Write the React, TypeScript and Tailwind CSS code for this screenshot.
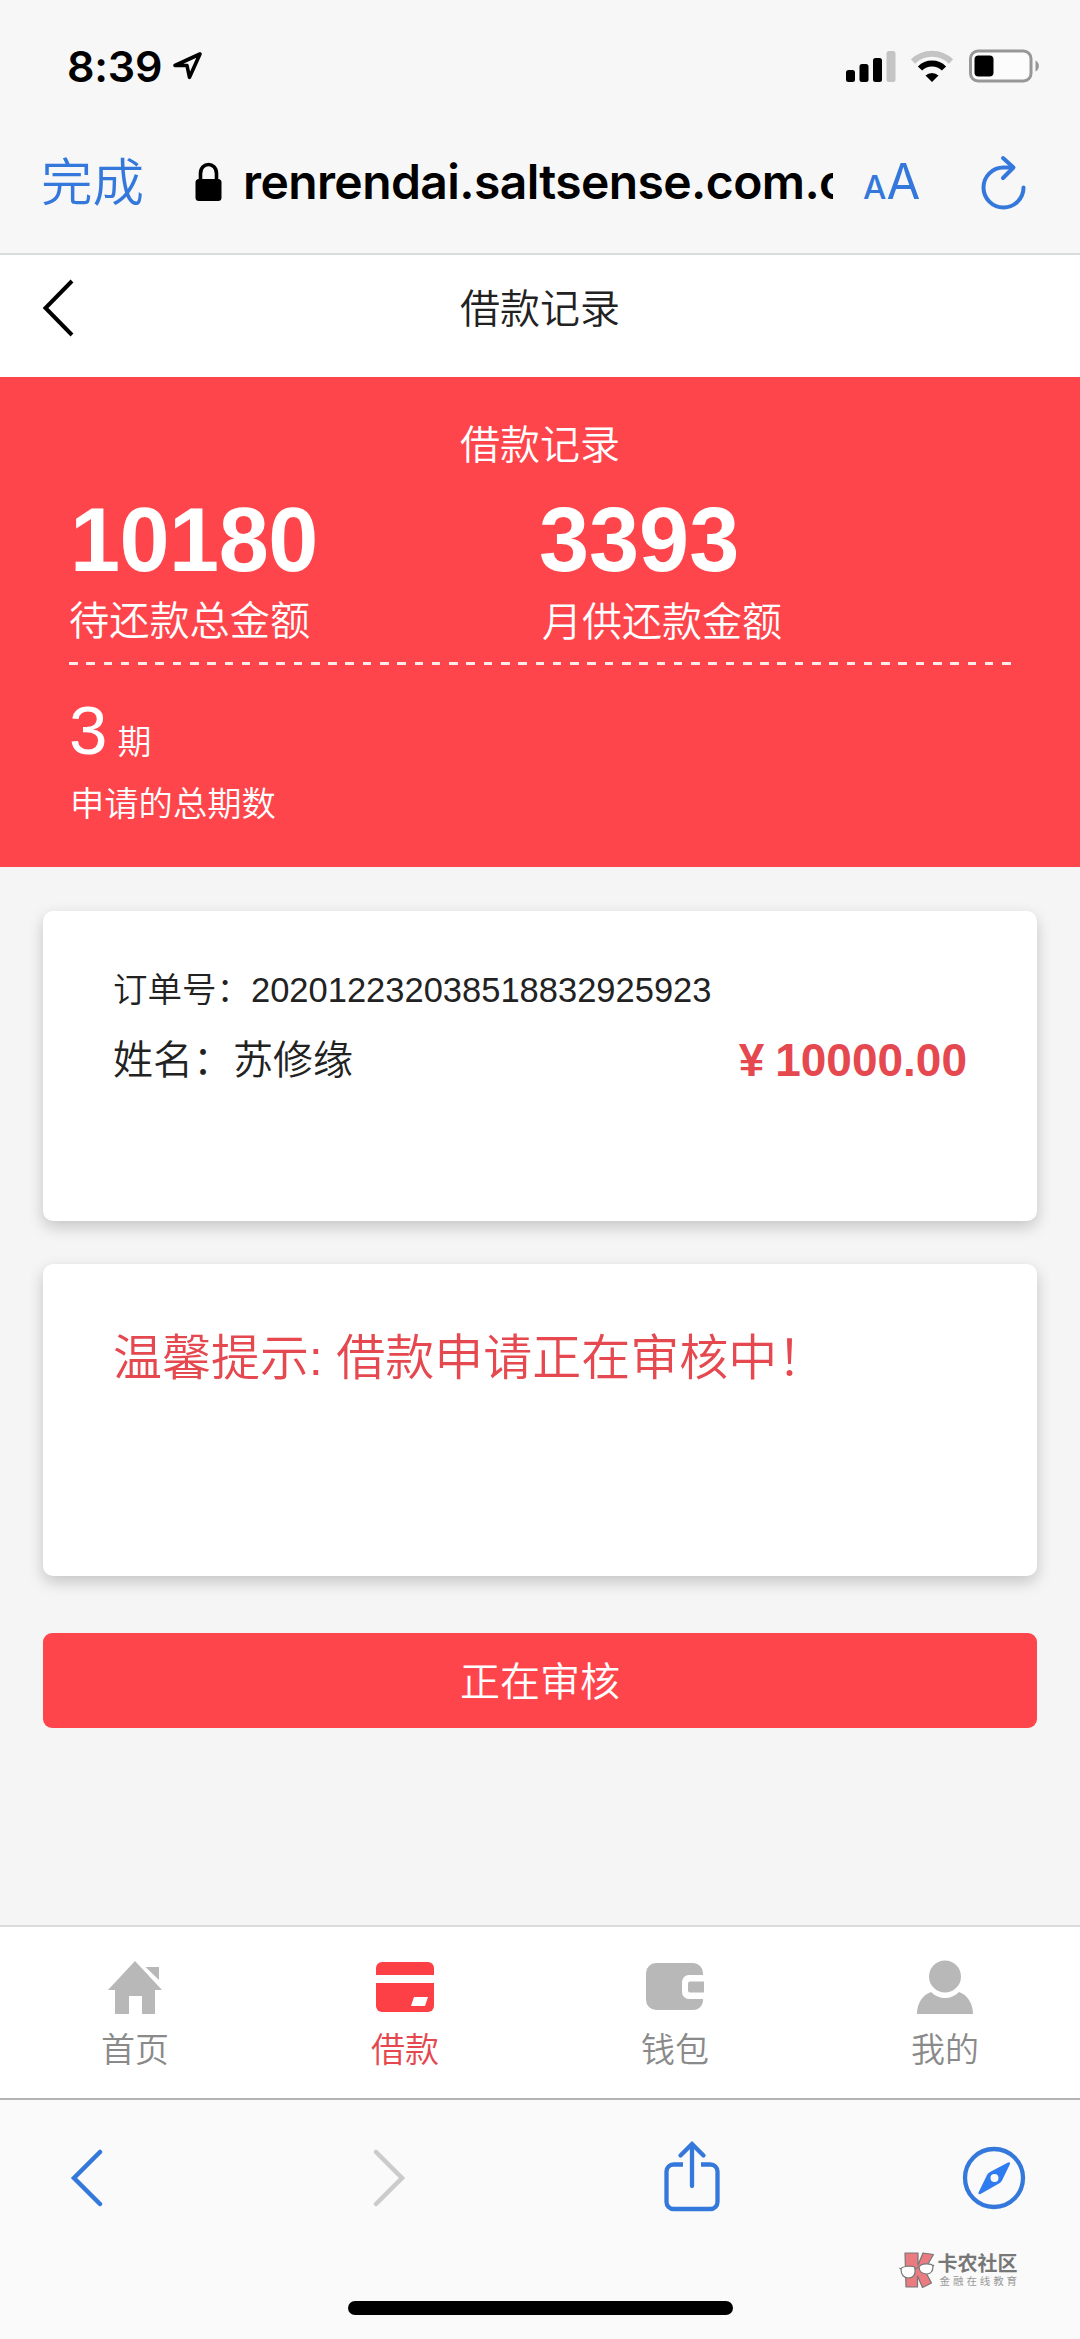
import { ReactNode } from "react";
import clsx from "clsx";

type TabProps = {
  label: string;
  active?: boolean;
  icon: ReactNode;
};

function StatusBar() {
  return (
    <div className="flex h-[132px] items-center pl-[67px] pr-[40px]">
      <span className="text-[43px] font-semibold leading-[60px] tracking-[-0.2px] font-['Inter',sans-serif]">
        8:39
      </span>
      <svg className="ml-[10px] h-[30px] w-[31px]" viewBox="0 0 31 30" fill="none">
        <path
          d="M28 3 3 14.500h12l2.500 11.800z"
          stroke="#000"
          strokeWidth="3.600"
          strokeLinejoin="round"
        />
      </svg>
      <div className="ml-auto flex items-center">
        <svg className="h-[32px] w-[50px]" viewBox="0 0 50 32">
          <rect x="0" y="20" width="9" height="12" rx="2.500" />
          <rect x="13.500" y="14" width="9" height="18" rx="2.500" />
          <rect x="27" y="8" width="9" height="24" rx="2.500" />
          <rect x="40.500" y="1" width="9" height="31" rx="2.500" fill="#c4c4c4" />
        </svg>
        <svg className="ml-[14px] h-[32px] w-[44px]" viewBox="0 0 44 32" fill="none">
          <path d="M3 11.500a27 27 0 0 1 38 0" stroke="#c4c4c4" strokeWidth="6" />
          <path d="M10 18.500a17 17 0 0 1 24 0" stroke="#000" strokeWidth="6" />
          <path d="M15.500 25.500a9.500 9.500 0 0 1 13 0L22 32z" fill="#000" />
        </svg>
        <svg className="ml-[14px] h-[34px] w-[72px]" viewBox="0 0 72 34">
          <rect
            x="2.500"
            y="2"
            width="60.500"
            height="30"
            rx="7.500"
            fill="#fcfcfc"
            stroke="#979797"
            strokeWidth="3"
          />
          <rect x="6.500" y="6.500" width="19" height="21" rx="4" />
          <path d="M67.500 11.500c4.500 2 4.500 9 0 11z" fill="#979797" />
        </svg>
      </div>
    </div>
  );
}

function AddressBar() {
  return (
    <div className="flex h-[121px] items-center pb-[23px] pl-[41px] pr-[54px] pt-[2px]">
      <span className="pt-[2px] text-[51.500px] leading-[60px] text-[#3478dc]">完成</span>
      <svg className="ml-[51px] h-[40px] w-[27px] shrink-0" viewBox="0 0 27 40">
        <path
          d="M5.500 19v-7.500c0-12 16-12 16 0V19"
          fill="none"
          stroke="#000"
          strokeWidth="3.600"
        />
        <rect x="0.500" y="17" width="26" height="22" rx="3.500" />
      </svg>
      <div className="ml-[21px] w-[590px] overflow-hidden whitespace-nowrap text-[48px] font-semibold leading-[60px] tracking-[-0.600px] font-['Inter',sans-serif]">
        renrendai.saltsense.com.c
      </div>
      <div className="ml-[30px] flex items-baseline pt-[4px] text-[#3478dc] font-['Inter',sans-serif]">
        <span className="text-[33px] font-medium leading-[60px]">A</span>
        <span className="text-[49px] font-normal leading-[60px]">A</span>
      </div>
      <svg
        className="ml-auto h-[58px] w-[46px]"
        viewBox="0 0 46 58"
        fill="none"
        stroke="#3478dc"
        strokeWidth="4"
        strokeLinecap="round"
        strokeLinejoin="round"
      >
        <path d="M43.500 34.500A20 20 0 1 1 23.500 14.500h9" />
        <path d="M23 5l10.500 9.500L23 25" />
      </svg>
    </div>
  );
}

function Card({ children }: { children: ReactNode }) {
  return (
    <div className="rounded-[10px] bg-white px-[70px] shadow-[0_6px_16px_rgba(0,0,0,0.2)]">
      {children}
    </div>
  );
}

function Tab({ label, active, icon }: TabProps) {
  return (
    <div
      className={clsx(
        "flex flex-1 flex-col items-center pt-[31px]",
        active ? "text-[#e5474e]" : "text-[#8a8a8a]"
      )}
    >
      <svg
        className={clsx("h-[58px] w-[60px]", active ? "fill-[#fc4045]" : "fill-[#b8b8b8]")}
        viewBox="0 0 60 58"
      >
        {icon}
      </svg>
      <span className="mt-[12px] text-[34px] leading-[44px]">{label}</span>
    </div>
  );
}

const tabs: TabProps[] = [
  {
    label: "首页",
    icon: (
      <>
        <path d="M30 3 57 32h-7v24H37V38H24v18H10V32H3z" />
        <path d="M40.500 9H54v13z" />
      </>
    ),
  },
  {
    label: "借款",
    active: true,
    icon: (
      <>
        <path d="M1 17V10a6 6 0 0 1 6-6h46a6 6 0 0 1 6 6v7z" />
        <path d="M1 25h58v23a6 6 0 0 1-6 6H7a6 6 0 0 1-6-6z" />
        <path d="M39 39h14l-3 9H36z" fill="#fff" />
      </>
    ),
  },
  {
    label: "钱包",
    icon: (
      <>
        <path d="M11 5h37a10 10 0 0 1 10 10v2H44a7 7 0 0 0-7 7v10a7 7 0 0 0 7 7h14a10 10 0 0 1-10 11H11A10 10 0 0 1 1 42V15A10 10 0 0 1 11 5z" />
        <path d="M45 23.500h14v11H45a2 2 0 0 1-2-2v-7a2 2 0 0 1 2-2z" />
      </>
    ),
  },
  {
    label: "我的",
    icon: (
      <>
        <circle cx="30" cy="18.500" r="16" />
        <path d="M16 34c8 8 20 8 28 0 9 3 14 12 14 22H2c0-10 5-19 14-22z" />
      </>
    ),
  },
];

function Watermark() {
  return (
    <div className="absolute right-[60px] top-[151px] flex items-center">
      <svg
        className="h-[38px] w-[36px]"
        viewBox="0 0 36 38"
        fill="#ea7b81"
        stroke="#777"
        strokeWidth="1.200"
        strokeLinejoin="round"
      >
        <path d="M6 2h13v12L24 2l10.500 1.500L25.500 19l7 13-9 4.500L18.500 25v11H7z" />
        <path d="M2 18c1-3 13-4 14-1 1 7-2 10-6.500 10S2 24 2 18z" fill="#fff" />
        <path d="M20 16c2-4 12-4 14-1 0 6-3 8-6.500 8S20 21 20 16z" fill="#fff" />
        <path d="M15.500 18l4.500-2M2 18l-1.500-1M34 15l1-1" fill="none" />
      </svg>
      <div className="ml-[3px] flex flex-col">
        <span className="text-[20px] font-bold leading-[22px] text-[#777]">卡农社区</span>
        <span className="pl-[2px] text-[10.500px] font-normal leading-[12px] tracking-[2.900px] text-[#999]">
          金融在线教育
        </span>
      </div>
    </div>
  );
}

export default function App() {
  return (
    <div className="flex h-[2339px] w-[1080px] flex-col overflow-hidden bg-[#f5f5f5] font-[350] text-[#222] font-['Liberation_Sans','Noto_Sans_CJK_SC',sans-serif]">
      <header className="h-[255px] border-b-2 border-[#d9dcdc] bg-[#f7f7f7] text-black">
        <StatusBar />
        <AddressBar />
      </header>

      <nav className="grid h-[122px] grid-cols-[1fr_auto_1fr] items-center bg-white px-[42px] pb-[16px]">
        <svg className="h-[58px] w-[32px]" viewBox="0 0 32 58" fill="none">
          <path d="M30 2 3.500 29 30 56" stroke="#000" strokeWidth="4" />
        </svg>
        <h1 className="pt-[2px] text-[40px] leading-[56px]">借款记录</h1>
      </nav>

      <section className="h-[490px] bg-[#ff454c] px-[69px] pt-[40px] text-white">
        <h2 className="text-center text-[40px] font-[350] leading-[56px]">借款记录</h2>
        <div className="mt-[22px] grid grid-cols-2">
          <div>
            <p className="pl-[1px] text-[90px] font-bold leading-[90px] tracking-[-0.500px]">
              10180
            </p>
            <p className="mt-[13px] text-[40.200px] leading-[48px]">待还款总金额</p>
          </div>
          <div>
            <p className="-ml-[1px] text-[90px] font-bold leading-[90px]">3393</p>
            <p className="mt-[13px] pl-[2px] text-[40px] leading-[48px]">月供还款金额</p>
          </div>
        </div>
        <div className="mt-[16px] h-[3px] w-[942px] bg-[repeating-linear-gradient(90deg,#ffe9e9_0_8.600px,transparent_8.600px_17.280px)]" />
        <p className="mt-[28px] flex h-[76px] items-baseline leading-[76px]">
          <span className="text-[69px]">3</span>
          <span className="ml-[10px] text-[34px]">期</span>
        </p>
        <p className="mt-[10px] pl-[1px] text-[34.300px] leading-[50px]">申请的总期数</p>
      </section>

      <main className="flex flex-1 flex-col px-[43px] pt-[44px]">
        <Card>
          <div className="h-[310px] pt-[54px]">
            <p className="text-[34.500px] leading-[50px]">订单号：202012232038518832925923</p>
            <div className="mt-[15px] flex items-center justify-between leading-[60px]">
              <span className="text-[40px]">姓名：苏修缘</span>
              <span className="text-[46px] font-bold text-[#e5484f] [word-spacing:-2px]">
                ¥ 10000.00
              </span>
            </div>
          </div>
        </Card>
        <div className="h-[43px]" />
        <Card>
          <div className="h-[312px] pt-[62px]">
            <p className="text-[49px] leading-[64px] text-[#e5484f]">
              温馨提示: 借款申请正在审核中！
            </p>
          </div>
        </Card>
        <button className="mt-[57px] h-[95px] rounded-[9px] bg-[#ff454c] pt-[3px] text-[40px] leading-[56px] text-white">
          正在审核
        </button>
      </main>

      <div className="flex h-[173px] border-t-2 border-[#dcdcdc] bg-white">
        {tabs.map((tab) => (
          <Tab key={tab.label} {...tab} />
        ))}
      </div>

      <footer className="relative h-[241px] border-t-2 border-[#b4b4b4] bg-[#fafafa]">
        <div className="flex h-[156px] items-center justify-between pl-[55px] pr-[54px]">
          <svg className="h-[58px] w-[64px]" viewBox="0 0 64 58" fill="none">
            <path
              d="M45 3 19 29l26 26"
              stroke="#3478dc"
              strokeWidth="4.500"
              strokeLinecap="round"
            />
          </svg>
          <svg className="h-[58px] w-[64px]" viewBox="0 0 64 58" fill="none">
            <path d="M19 3l26 26-26 26" stroke="#cbcbcb" strokeWidth="4.500" strokeLinecap="round" />
          </svg>
          <svg
            className="mb-[5px] h-[72px] w-[64px]"
            viewBox="-3 0 64 72"
            fill="none"
            stroke="#3478dc"
            strokeWidth="4.300"
          >
            <path d="M20 24.500h-9.500a7 7 0 0 0-7 7V62a7 7 0 0 0 7 7h37a7 7 0 0 0 7-7V31.500a7 7 0 0 0-7-7H38" />
            <path d="M29 46V4M17.500 15.500 29 4l11.500 11.500" strokeLinecap="round" />
          </svg>
          <svg className="h-[64px] w-[64px]" viewBox="0 0 64 64" fill="none">
            <circle cx="32" cy="32" r="29" stroke="#3478dc" strokeWidth="4.300" />
            <path
              fillRule="evenodd"
              d="M46 16.500q2.500-1 2 1.500L40 34.500q-1 2-3 3L18.500 48q-2.500 1-2-1.500L25 29q1-2 3-3zM32.500 28a4 4 0 1 0 0 8 4 4 0 1 0 0-8z"
              fill="#2f7bf0"
            />
          </svg>
        </div>
        <div className="mx-auto mt-[45px] h-[14px] w-[385px] rounded-full bg-black" />
        <Watermark />
      </footer>
    </div>
  );
}
